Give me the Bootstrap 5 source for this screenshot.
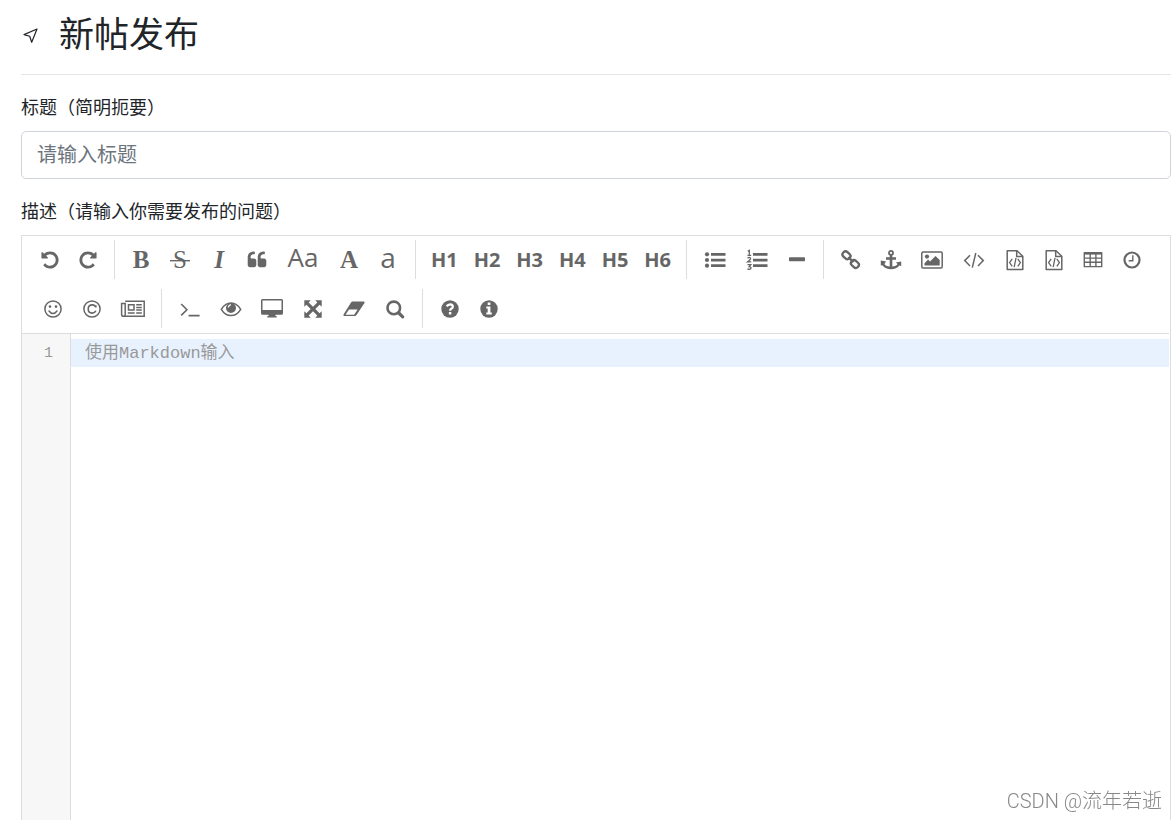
<!DOCTYPE html>
<html lang="zh-CN">
<head>
<meta charset="utf-8">
<meta name="viewport" content="width=device-width, initial-scale=1">
<title>新帖发布</title>
<link href="https://cdn.jsdelivr.net/npm/bootstrap@5.3.0/dist/css/bootstrap.min.css" rel="stylesheet">
<style>
  body { font-family: "Open Sans", "Noto Sans CJK SC", sans-serif; font-size: 18px; line-height: 24px; }
  .publish-page { padding: 0 5px 0 21px; }
  .page-head { height: 75px; padding-bottom: 6px; border-bottom: 1px solid #e5e5e5; margin-bottom: 19px; }
  .page-head h1 { font-family: "Noto Sans CJK SC", sans-serif; font-size: 35px; font-weight: 400; line-height: 48px; padding-bottom: 4px; }
  .page-head svg { width: 20px; height: 20px; margin-right: 18px; }
  .field-label { font-family: "Noto Sans CJK SC", sans-serif; font-weight: 400; margin-bottom: 13px; }
  .title-input { font-family: "Noto Sans CJK SC", sans-serif; font-size: 20px; height: 48px; border-color: #ced4da; border-radius: 5px; margin-bottom: 19px; padding: 0 15px 3px; }
  .title-input::placeholder { color: #6c757d; }
  .editor { border: 1px solid #ddd; border-bottom: 0; }
  .tool-bar { padding: 4px 0 5px 9px; gap: 10px; border-bottom: 1px solid #ddd; margin-right: 1px; }
  .tool-row { height: 39px; }
  .tool-row.second { padding-left: 3px; }
  .tool { border: 0; background: none; padding: 0; color: #666; line-height: 39px; width: 38px; display: flex; align-items: center; justify-content: center; flex: none; }
  .tool:hover { background: #eee; }
  .tool svg { width: 22px; height: 20px; fill: currentColor; overflow: visible; }
  .tool .ln { fill: none; stroke: currentColor; }
  .w-mid { width: 40px; }
  .w-wide { width: 42px; }
  .w-case { width: 54px; }
  .serif { font-family: "Liberation Serif", serif; font-size: 25px; }
  .big { font-size: 26px; line-height: 35px; padding-bottom: 4px; }
  .lower { font-size: 28px; }
  .heads { width: 256px; }
  .heads .tool { width: auto; flex: 1 1 0; font-size: 20px; font-weight: 700; }
  .divider { width: 1px; margin: 0 7px; background: #ddd; flex: none; }
  .gutter { width: 49px; background: #f7f7f7; border-right: 1px solid #ddd; padding: 7px 17px 0 0; color: #999; font: 15px/26px "Liberation Mono", monospace; text-align: right; }
  .code-area { border: 0; outline: 0; resize: none; padding: 6px 14px; margin-right: 1px; font: 17px/28px "Liberation Mono", "Noto Sans CJK SC", monospace; background: linear-gradient(#e8f2ff, #e8f2ff) 0 5px / 100% 28px no-repeat; }
  .code-area::placeholder { color: #999; opacity: 1; }
  .watermark { right: 14px; bottom: 5px; font: 300 20px/28px Roboto, "Noto Sans CJK SC", sans-serif; color: #888; text-shadow: 1px 1px 0 #fff; }
</style>
</head>
<body>
<main class="publish-page container-fluid d-flex flex-column min-vh-100">
  <header class="page-head d-flex align-items-center">
    <svg viewBox="0 0 20 20" fill="none" stroke="#212529" stroke-width="1.2" stroke-linejoin="round" aria-hidden="true"><path d="M16 5 3 10.600l5.700 1.700 2 6z"/></svg>
    <h1 class="mb-0">新帖发布</h1>
  </header>
  <form class="d-flex flex-column flex-grow-1">
    <label class="field-label" for="title">标题（简明扼要）</label>
    <input class="form-control title-input" id="title" type="text" placeholder="请输入标题">
    <label class="field-label" for="description">描述（请输入你需要发布的问题）</label>
    <div class="editor d-flex flex-column flex-grow-1">
      <div class="tool-bar d-flex flex-column" role="toolbar" aria-label="Markdown">
        <div class="tool-row d-flex">
          <button type="button" class="tool" aria-label="撤销"><svg viewBox="0 0 1792 1792"><path d="M1664 896q0 156-61 298t-164 245-245 164-298 61q-172 0-327-72.5t-264-204.5q-7-10-6.5-22.500t8.500-20.500l137-138q10-9 25-9 16 2 23 12 73 95 179 147t225 52q104 0 198.500-40.500t163.500-109.500 109.500-163.500 40.500-198.500-40.500-198.500-109.500-163.500-163.500-109.500-198.500-40.500q-98 0-188 35.500t-160 101.500l137 138q31 30 14 69-17 40-59 40h-448q-26 0-45-19t-19-45v-448q0-42 40-59 39-17 69 14l130 129q107-101 244.500-156.500t284.500-55.500q156 0 298 61t245 164 164 245 61 298z"/></svg></button>
          <button type="button" class="tool" aria-label="重做"><svg viewBox="0 0 1792 1792"><path d="M1664 256v448q0 26-19 45t-45 19h-448q-42 0-59-40-17-39 14-69l138-138q-148-137-349-137-104 0-198.500 40.500t-163.500 109.500-109.500 163.500-40.500 198.500 40.500 198.500 109.500 163.500 163.500 109.500 198.500 40.500q119 0 225-52t179-147q7-10 23-12 15 0 25 9l137 138q9 8 9.500 20.500t-7.500 22.500q-109 132-264 204.500t-327 72.500q-156 0-298-61t-245-164-164-245-61-298 61-298 164-245 245-164 298-61q147 0 284.500 55.500t244.500 156.500l130-129q29-31 70-14 39 17 39 59z"/></svg></button>
          <span class="divider"></span>
          <button type="button" class="tool serif fw-bold">B</button>
          <button type="button" class="tool serif w-mid" aria-label="删除线"><svg viewBox="0 0 22 20"><text x="11" y="18" text-anchor="middle" font-size="25">S</text><path d="M1 10h20v1.400H1z"/></svg></button>
          <button type="button" class="tool serif fw-bold fst-italic">I</button>
          <button type="button" class="tool" aria-label="引用"><svg viewBox="0 0 1792 1792"><path d="M832 960v384q0 80-56 136t-136 56h-384q-80 0-136-56t-56-136v-704q0-104 40.500-198.500t109.500-163.500 163.500-109.500 198.500-40.500h64q26 0 45 19t19 45v128q0 26-19 45t-45 19h-64q-106 0-181 75t-75 181v32q0 40 28 68t68 28h224q80 0 136 56t56 136zm896 0v384q0 80-56 136t-136 56h-384q-80 0-136-56t-56-136v-704q0-104 40.500-198.500t109.500-163.500 163.500-109.500 198.500-40.500h64q26 0 45 19t19 45v128q0 26-19 45t-45 19h-64q-106 0-181 75t-75 181v32q0 40 28 68t68 28h224q80 0 136 56t56 136z"/></svg></button>
          <button type="button" class="tool big w-case">Aa</button>
          <button type="button" class="tool serif fw-bold">A</button>
          <button type="button" class="tool big lower w-mid">a</button>
          <span class="divider"></span>
          <div class="heads d-flex">
            <button type="button" class="tool">H1</button>
            <button type="button" class="tool">H2</button>
            <button type="button" class="tool">H3</button>
            <button type="button" class="tool">H4</button>
            <button type="button" class="tool">H5</button>
            <button type="button" class="tool">H6</button>
          </div>
          <span class="divider"></span>
          <button type="button" class="tool w-wide" aria-label="无序列表"><svg viewBox="0 0 22 20"><circle cx="3" cy="4.300" r="2.100"/><circle cx="3" cy="10" r="2.100"/><circle cx="3" cy="15.700" r="2.100"/><path d="M7 3h14.500v2.700H7zM7 8.700h14.500v2.700H7zM7 14.300h14.500V17H7z"/></svg></button>
          <button type="button" class="tool w-wide" aria-label="有序列表"><svg viewBox="0 0 22 20"><path d="M7 3h14.500v2.700H7zM7 8.700h14.500v2.700H7zM7 14.300h14.500V17H7z"/><path class="ln" stroke-width="1.300" d="M1.800 1.200 3.300.400v4.800M1.500 5.300h3.700M1.500 8.200q1.500-1.300 2.800-.400 1 1.300-2.600 4h3.500M1.500 14.600h3.300l-1.700 2q2.200.200 1.800 1.800-.900 1.600-3.500.500"/></svg></button>
          <button type="button" class="tool" aria-label="横线"><svg viewBox="0 0 22 20"><rect x="3" y="7.300" width="16" height="4" rx=".8"/></svg></button>
          <span class="divider"></span>
          <button type="button" class="tool w-mid" aria-label="链接"><svg viewBox="0 0 22 20"><g class="ln" stroke-width="2.300"><rect x="2.300" y="2.300" width="8.400" height="6" rx="2.800" transform="rotate(43 6.500 5.300)"/><rect x="10.700" y="11" width="8.400" height="6" rx="2.800" transform="rotate(43 14.900 14)"/><path d="m8.300 7.200 5.200 5"/></g></svg></button>
          <button type="button" class="tool w-mid" aria-label="锚点"><svg viewBox="0 0 22 20"><circle class="ln" cx="11" cy="2.900" r="2" stroke-width="1.800"/><path d="M9.700 4.800h2.600v2.400H16v2.500h-3.700v6.900c2.500-.3 4.600-1.300 5.300-2.600l-1.700-1.400 5.300-1.200v5.200l-1.500-1.300c-2 2.900-5.200 4-8.700 4s-6.700-1.100-8.700-4L.8 15.600v-5.200l5.300 1.200L4.400 14c.7 1.300 2.800 2.300 5.300 2.600V9.700H6V7.200h3.700z"/></svg></button>
          <button type="button" class="tool w-wide" aria-label="图片"><svg viewBox="0 0 22 20"><rect class="ln" x=".8" y="2" width="20.400" height="16" rx="1.200" stroke-width="1.500"/><circle cx="6" cy="6.600" r="2.100"/><path d="M3.500 15.600v-2.400l3.600-3.600L9 11.500l5.500-5.600 4.200 4.200v5.500z"/></svg></button>
          <button type="button" class="tool w-wide" aria-label="行内代码"><svg viewBox="0 0 22 20"><path class="ln" stroke-width="1.500" d="M7 5.200 1.700 10.600 7 16m8-10.800 5.300 5.400L15 16M12.800 3 9.300 17.700"/></svg></button>
          <button type="button" class="tool w-mid" aria-label="代码块"><svg viewBox="0 0 22 20"><g class="ln" stroke-width="1.500"><path d="M3.200.8h9.800l5.800 5.400v13.200H3.200z" stroke-linejoin="round"/><path d="M12.700.8v5.800h6"/><path d="m8.200 8.900-2.600 3.700 2.600 3.700m5.600-7.400 2.600 3.700-2.600 3.700M12 7.800l-1.800 9.400" stroke-width="1.300"/></g></svg></button>
          <button type="button" class="tool" aria-label="预格式文本"><svg viewBox="0 0 22 20"><g class="ln" stroke-width="1.500"><path d="M3.200.8h9.800l5.800 5.400v13.200H3.200z" stroke-linejoin="round"/><path d="M12.700.8v5.800h6"/><path d="m8.200 8.900-2.600 3.700 2.600 3.700m5.600-7.400 2.600 3.700-2.600 3.700M12 7.800l-1.800 9.400" stroke-width="1.300"/></g></svg></button>
          <button type="button" class="tool w-mid" aria-label="表格"><svg viewBox="0 0 22 20"><path class="ln" stroke-width="1.400" d="M2.300 3h17.400v13.600H2.300zM2.300 8.100h17.400M2.300 12.300h17.400M8.200 3v13.600M13.900 3v13.600"/><path d="M2 2h18v2.600H2z"/></svg></button>
          <button type="button" class="tool" aria-label="日期时间"><svg viewBox="0 0 22 20"><circle class="ln" cx="11" cy="10" r="7.500" stroke-width="2.200"/><path class="ln" stroke-width="1.400" d="M11.800 5.300v5.500H7.700"/></svg></button>
        </div>
        <div class="tool-row second d-flex">
          <button type="button" class="tool" aria-label="表情"><svg viewBox="0 0 22 20"><circle class="ln" cx="11" cy="10" r="8.100" stroke-width="1.500"/><circle cx="8" cy="7.600" r="1.300"/><circle cx="14" cy="7.600" r="1.300"/><path class="ln" stroke-width="1.500" stroke-linecap="round" d="M7 12q4 5.200 8 0"/></svg></button>
          <button type="button" class="tool w-mid" aria-label="HTML 实体"><svg viewBox="0 0 22 20"><circle class="ln" cx="11" cy="10" r="8.100" stroke-width="1.500"/><path class="ln" stroke-width="1.600" d="M14.800 8.500V6.300M14.700 8Q14 5.900 11.400 5.900C8.700 5.900 7.200 7.800 7.200 10s1.500 4.100 4.100 4.100q2.600 0 3.600-2.300"/></svg></button>
          <button type="button" class="tool w-wide" aria-label="分页"><svg viewBox="0 0 22 20"><path class="ln" stroke-width="1.500" d="M3.200 2.300h19v15H1.600q-2 0-2-1.800V4.500h3.600V15.500q0 1.800-1.600 1.800M6.500 5.700h5.500v5.300H6.500zM14.200 5.700h5.600M14.200 8.400h5.600M14.200 11.100h5.600M5.800 14H12.700M14.200 14h5.600"/></svg></button>
          <span class="divider"></span>
          <button type="button" class="tool w-wide" aria-label="跳转到行"><svg viewBox="0 0 22 20"><path class="ln" stroke-width="1.600" d="m2.200 5 5.700 5.700-5.700 5.700M9.600 16.600h11"/></svg></button>
          <button type="button" class="tool w-mid" aria-label="实时预览"><svg viewBox="0 0 22 20"><path class="ln" stroke-width="1.500" d="M1.300 10.300Q5.200 4 11 4t9.700 6.300Q16.800 16.600 11 16.600T1.300 10.300z"/><path fill-rule="evenodd" d="M11 4a5 5 0 1 1 0 10 5 5 0 0 1 0-10zm0 1.300a3 3 0 0 0-3.200 3.200h1.200a2 2 0 0 1 2-2z"/></svg></button>
          <button type="button" class="tool w-wide" aria-label="全屏预览"><svg viewBox="0 0 22 20"><path fill-rule="evenodd" d="M1.500 0h19q1.500 0 1.500 1.500v12.700q0 1.500-1.500 1.500h-6v1.600h1.300v1.300H6.200v-1.300h1.300v-1.600h-6q-1.500 0-1.500-1.500V1.500Q0 0 1.500 0zm0 1.400v9.500h19V1.400z"/></svg></button>
          <button type="button" class="tool w-mid" aria-label="全屏"><svg viewBox="0 0 22 20"><path d="M2.300 1.300h6.400L6.700 3.400l4.300 4.300 4.300-4.300-2-2.100h6.400v6.400l-2.100-2-4.300 4.300 4.300 4.300 2.100-2v6.400h-6.400l2-2.100-4.300-4.300-4.300 4.300 2 2.100H2.300v-6.400l2.100 2L8.700 10 4.400 5.700l-2.100 2z"/></svg></button>
          <button type="button" class="tool w-wide" aria-label="清空"><svg viewBox="0 0 22 20"><path fill-rule="evenodd" d="M9.500 2.500h11.300q1.200.3.700 1.500l-8.200 12.300q-.5.700-1.500.7H1.200Q0 16.800.5 15.600l7.700-12.400Q8.700 2.500 9.500 2.500zM6 10.500l-3.500 5.300h8.600l3.500-5.300z"/></svg></button>
          <button type="button" class="tool w-mid" aria-label="搜索"><svg viewBox="0 0 22 20"><circle class="ln" cx="9.800" cy="8.900" r="6.300" stroke-width="2.600"/><path class="ln" stroke-width="3.200" stroke-linecap="round" d="m14.800 14 3.900 3.800"/></svg></button>
          <span class="divider"></span>
          <button type="button" class="tool w-mid" aria-label="帮助"><svg viewBox="0 0 22 20"><circle cx="11" cy="10" r="8.700"/><g stroke="#fff" fill="none" stroke-width="2.300"><path d="M7.700 7.400Q8.900 5.300 11.200 5.300q2.600.2 2.600 2.200 0 1.500-1.500 2.200-1.200.7-1.200 2.100"/><path d="M11.100 13v2.500" stroke-width="2.500"/></g></svg></button>
          <button type="button" class="tool" aria-label="关于"><svg viewBox="0 0 22 20"><circle cx="11" cy="10" r="8.700"/><path fill="#fff" d="M9.700 3.600h2.700V6H9.700zM8.300 7.500h4.100v5.900h1.400v2.100H8.300v-2.100h1.400V9.600H8.300z"/></svg></button>
        </div>
      </div>
      <div class="d-flex flex-grow-1">
        <div class="gutter flex-shrink-0">1</div>
        <textarea class="code-area flex-grow-1" id="description" placeholder="使用Markdown输入"></textarea>
      </div>
    </div>
  </form>
</main>
<div class="watermark position-fixed pe-none">CSDN @流年若逝</div>
<script src="https://cdn.jsdelivr.net/npm/bootstrap@5.3.0/dist/js/bootstrap.bundle.min.js"></script>
</body>
</html>
